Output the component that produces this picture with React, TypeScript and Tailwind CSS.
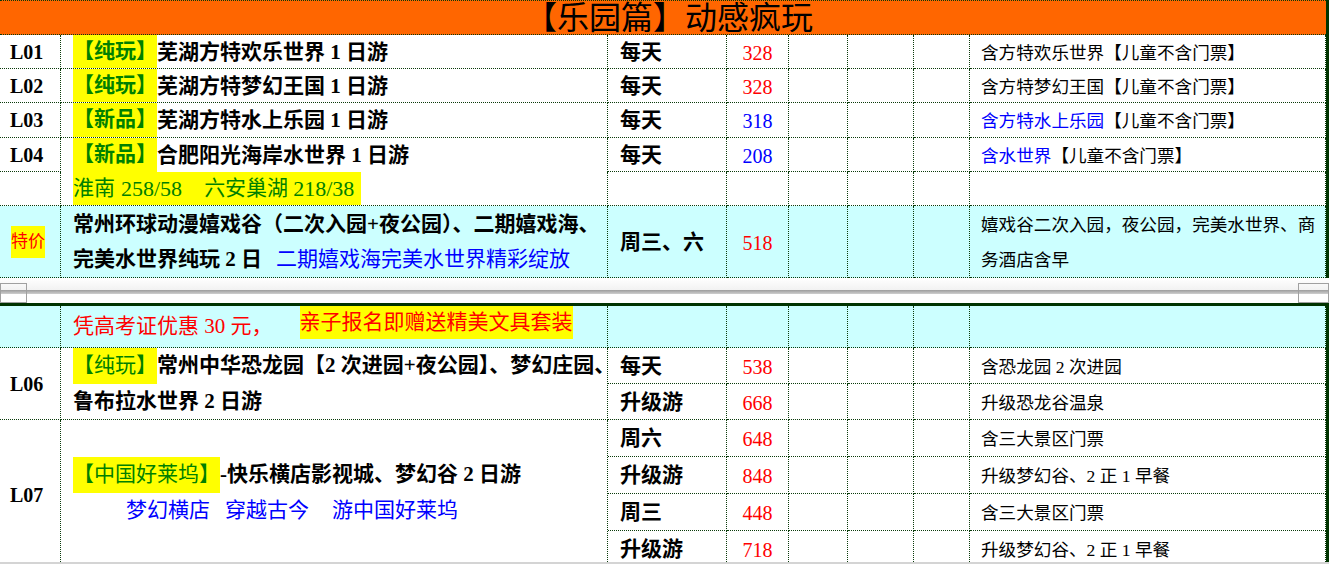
import React from 'react';

const cols = 'grid grid-cols-[61px_547px_119px_62px_59px_66px_56px_356px]';
const font = "font-['Liberation_Serif','Noto_Sans_CJK_SC',serif]";
const cyan = 'bg-[#ccffff]';
const red = 'text-[#ff0000]';
const blue = 'text-[#0000ff]';
const green = 'text-[#008000]';

const cellCls = (bottom = true) =>
  `flex items-center border-r ${bottom ? 'border-b' : ''} border-dotted border-[#0a3a0a]`;

type CellProps = { children?: React.ReactNode; className?: string; bottom?: boolean };

const Tag: React.FC<CellProps> = ({ children, className = '' }) => (
  <span className={`flex items-center self-stretch bg-[#ffff00] ${className}`}>{children}</span>
);

const IdCell: React.FC<CellProps> = ({ children, className = '' }) => (
  <div className={`${cellCls()} pl-[10px] text-[20px] font-bold ${className}`}>{children}</div>
);

const NameCell: React.FC<CellProps> = ({ children, className = '', bottom = true }) => (
  <div className={`${cellCls(bottom)} pl-3 text-[21px] font-bold whitespace-nowrap ${className}`}>{children}</div>
);

const DayCell: React.FC<CellProps> = ({ children, className = '' }) => (
  <div className={`${cellCls()} pl-3 pt-[2px] text-[21px] font-bold ${className}`}>{children}</div>
);

const PriceCell: React.FC<CellProps> = ({ children, className = '' }) => (
  <div className={`${cellCls()} justify-center pt-[2px] text-[20px] ${className}`}>{children}</div>
);

const NoteCell: React.FC<CellProps> = ({ children, className = '' }) => (
  <div className={`${cellCls()} pl-[11px] pt-[3px] text-[17.6px] whitespace-nowrap ${className}`}>{children}</div>
);

const Blanks: React.FC<{ className?: string }> = ({ className = '' }) => (
  <>
    <div className={`${cellCls()} ${className}`} />
    <div className={`${cellCls()} ${className}`} />
    <div className={`${cellCls()} ${className}`} />
  </>
);

const top = [
  { id: 'L01', tag: '【纯玩】', name: '芜湖方特欢乐世界 1 日游', price: '328', pc: red, note: <>含方特欢乐世界【儿童不含门票】</> },
  { id: 'L02', tag: '【纯玩】', name: '芜湖方特梦幻王国 1 日游', price: '328', pc: red, note: <>含方特梦幻王国【儿童不含门票】</> },
  {
    id: 'L03', tag: '【新品】', name: '芜湖方特水上乐园 1 日游', price: '318', pc: blue,
    note: <><span className={blue}>含方特水上乐园</span>【儿童不含门票】</>,
  },
  {
    id: 'L04', tag: '【新品】', name: '合肥阳光海岸水世界 1 日游', price: '208', pc: blue,
    note: <><span className={blue}>含水世界</span>【儿童不含门票】</>,
  },
];

const l07 = [
  { day: '周六', price: '648', note: '含三大景区门票' },
  { day: '升级游', price: '848', note: '升级梦幻谷、2 正 1 早餐' },
  { day: '周三', price: '448', note: '含三大景区门票' },
  { day: '升级游', price: '718', note: '升级梦幻谷、2 正 1 早餐' },
];

export default function App() {
  return (
    <div className={`w-[1329px] h-[564px] overflow-hidden bg-white text-black flex flex-col ${font}`}>
      {/* upper pane */}
      <div className="flex">
        <div className="w-[1326px]">
          <div className="h-[35px] border-y border-dotted border-[#0a3a0a] bg-[#ff6600] flex items-center justify-center pl-[12px] text-[32px] leading-none">
            【乐园篇】动感疯玩
          </div>
          <div className={`${cols} grid-rows-[34px_34px_35px_34px_34px_72px]`}>
            {top.map((r, i) => (
              <React.Fragment key={r.id}>
                <IdCell>{r.id}</IdCell>
                <NameCell bottom={i !== 3}>
                  <Tag className={green}>{r.tag}</Tag>
                  <span className="pt-[2px]">{r.name}</span>
                </NameCell>
                <DayCell>每天</DayCell>
                <PriceCell className={r.pc}>{r.price}</PriceCell>
                <Blanks />
                <NoteCell>{r.note}</NoteCell>
              </React.Fragment>
            ))}

            <IdCell />
            <NameCell>
              <Tag className={`${green} w-[288px] font-normal`}>
                <span>淮南</span>
                <span className="ml-[6px] text-[22px]">258/58</span>
                <span className="ml-[22px]">六安巢湖</span>
                <span className="ml-[5px] text-[22px]">218/38</span>
              </Tag>
            </NameCell>
            <DayCell />
            <PriceCell />
            <Blanks />
            <NoteCell />

            <div className={`${cellCls()} ${cyan} pl-[11px]`}>
              <span className={`bg-[#ffff00] ${red} h-[32px] flex items-center text-[17px]`}>特价</span>
            </div>
            <NameCell className={`${cyan} flex-col items-start justify-center leading-[35px]`}>
              <span>常州环球动漫嬉戏谷（二次入园+夜公园）、二期嬉戏海、</span>
              <span>
                完美水世界纯玩 2 日<span className={`${blue} ml-[14px] font-normal`}>二期嬉戏海完美水世界精彩绽放</span>
              </span>
            </NameCell>
            <DayCell className={cyan}>周三、六</DayCell>
            <PriceCell className={`${cyan} ${red}`}>518</PriceCell>
            <Blanks className={cyan} />
            <NoteCell className={`${cyan} flex-col items-start justify-center leading-[35px]`}>
              <span>嬉戏谷二次入园，夜公园，完美水世界、商</span>
              <span>务酒店含早</span>
            </NoteCell>
          </div>
        </div>
        <div className="w-[3px] bg-[#003300]" />
      </div>

      {/* pane splitter */}
      <div className="relative flex flex-col h-[25px]">
        <div className="h-[12px] bg-gradient-to-b from-white to-[#f2f2f2]" />
        <div className="h-[4px] bg-gradient-to-b from-[#9c9c9c] to-[#cfcfcf]" />
        <div className="flex-1 bg-white" />
        <div className="absolute left-0 top-[5px] w-[27px] h-[20px] border border-[#a0a0a0]" />
        <div className="absolute right-0 top-[5px] w-[31px] h-[20px] border border-[#a0a0a0]" />
      </div>
      <div className="h-[3px] bg-[#003300]" />

      {/* lower pane */}
      <div className="flex flex-1 min-h-0 overflow-hidden">
        <div className={`w-[1326px] ${cols} grid-rows-[42px_36px_36px_37px_37px_37px_37px]`}>
          <IdCell className={cyan} />
          <NameCell className={`${cyan} font-normal ${red}`}>
            <span>凭高考证优惠 30 元，</span>
            <span className="ml-[27px] h-[33px] self-start flex items-center bg-[#ffff00]">亲子报名即赠送精美文具套装</span>
          </NameCell>
          <DayCell className={cyan} />
          <PriceCell className={cyan} />
          <Blanks className={cyan} />
          <NoteCell className={cyan} />

          <IdCell className="row-span-2">L06</IdCell>
          <NameCell className="row-span-2 flex-col items-start">
            <span className="h-[36px] flex items-stretch">
              <Tag className={`${green} font-normal`}>【纯玩】</Tag>
              <span className="flex items-center">常州中华恐龙园【2 次进园+夜公园】、梦幻庄园、</span>
            </span>
            <span className="h-[35px] flex items-center">鲁布拉水世界 2 日游</span>
          </NameCell>
          <DayCell>每天</DayCell>
          <PriceCell className={red}>538</PriceCell>
          <Blanks />
          <NoteCell>含恐龙园 2 次进园</NoteCell>
          <DayCell>升级游</DayCell>
          <PriceCell className={red}>668</PriceCell>
          <Blanks />
          <NoteCell>升级恐龙谷温泉</NoteCell>

          <IdCell className="row-span-4 items-start pt-[60px]">L07</IdCell>
          <NameCell className="row-span-4 flex-col items-start justify-start pt-[37px]">
            <span className="h-[36px] flex items-stretch">
              <Tag className={`${green} font-normal`}>【中国好莱坞】</Tag>
              <span className="flex items-center">-快乐横店影视城、梦幻谷 2 日游</span>
            </span>
            <span className={`h-[36px] flex items-center ${blue} font-normal`}>
              <span className="ml-[53px]">梦幻横店</span>
              <span className="ml-[15px]">穿越古今</span>
              <span className="ml-[23px]">游中国好莱坞</span>
            </span>
          </NameCell>
          {l07.map((r, i) => (
            <React.Fragment key={i}>
              <DayCell>{r.day}</DayCell>
              <PriceCell className={red}>{r.price}</PriceCell>
              <Blanks />
              <NoteCell>{r.note}</NoteCell>
            </React.Fragment>
          ))}
        </div>
        <div className="w-[3px] bg-[#003300]" />
      </div>
      <div className="h-[2px] bg-[#d4d4d4]" />
    </div>
  );
}
